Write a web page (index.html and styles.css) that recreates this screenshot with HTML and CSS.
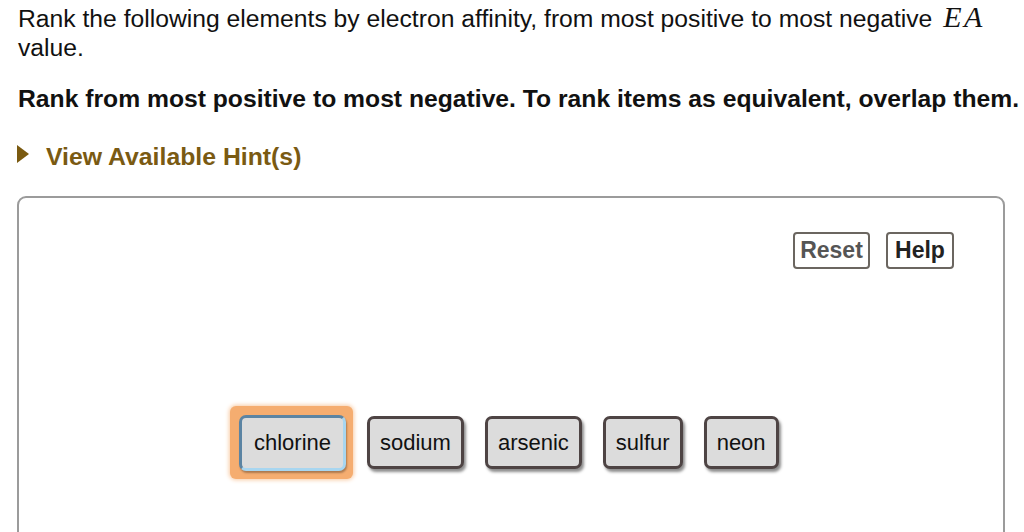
FILE: index.html
```html
<!DOCTYPE html>
<html>
<head>
<meta charset="utf-8">
<link rel="stylesheet" href="styles.css">
</head>
<body>
<div class="page">
  <p class="prompt">Rank the following elements by electron affinity, from most positive to most negative <span class="math">EA</span> value.</p>
  <p class="instr">Rank from most positive to most negative. To rank items as equivalent, overlap them.</p>
  <div class="hint"><span class="tri"></span><span class="hint-text">View Available Hint(s)</span></div>
  <div class="panel">
    <div class="tools">
      <span class="tbtn reset">Reset</span>
      <span class="tbtn help">Help</span>
    </div>
    <div class="chips">
      <span class="chip-wrap"><span class="chip sel">chlorine</span></span>
      <span class="chip">sodium</span>
      <span class="chip">arsenic</span>
      <span class="chip">sulfur</span>
      <span class="chip">neon</span>
    </div>
  </div>
</div>
</body>
</html>
```
FILE: styles.css
```css
html, body { margin: 0; padding: 0; background: #fff; }
body { font-family: "Liberation Sans", Arial, sans-serif; color: #111; overflow: hidden; width: 1024px; }
.page { padding: 0 0 0 18px; }
.prompt { margin: 0; padding-top: 4px; font-size: 24.7px; line-height: 29px; max-width: 990px; }
.math { font-family: "Liberation Serif", "Times New Roman", serif; font-style: italic; font-size: 30px; letter-spacing: 2.5px; margin-left: 4px; line-height: 20px; }
.instr { margin: 22px 0 0 0; font-size: 24.7px; line-height: 29px; font-weight: bold; white-space: nowrap; }
.hint { display: flex; align-items: center; margin-top: 29px; height: 29px; }
.tri { width: 0; height: 0; border-left: 12px solid #7a5a10; border-top: 9px solid transparent; border-bottom: 9px solid transparent; margin: 0 17px 5px -1px; }
.hint-text { font-size: 24.8px; font-weight: bold; color: #7a5a12; line-height: 29px; }
.panel { margin: 25px 0 0 -1px; width: 988px; height: 360px; border: 2px solid #9b9b9b; border-radius: 9px; box-sizing: border-box; }
.tools { display: flex; justify-content: flex-end; gap: 16px; padding: 34px 49px 0 0; }
.tbtn { display: inline-flex; align-items: center; justify-content: center; height: 37px; box-sizing: border-box; border: 2px solid #6b6660; border-radius: 4px; font-size: 23px; font-weight: bold; }
.reset { color: #555; width: 77px; }
.help { color: #222; width: 68px; }
.chips { display: flex; align-items: center; gap: 21px; padding: 137px 0 0 211px; }
.chip { display: inline-flex; align-items: center; justify-content: center; height: 53px; box-sizing: border-box; padding: 0 10px; background: #dcdcdc; border: 3px solid #4e4444; border-radius: 7px; font-size: 22px; color: #111; box-shadow: 2px 3px 3px rgba(0,0,0,0.45); }
.chip-wrap { display: inline-flex; padding: 9px 7px 8px 9px; background: #f5ad70; border-radius: 6px; box-shadow: 0 0 4px 1px #f8cba4; margin-right: -7px; }
.chip.sel { border-color: #5b84a3; border-right-color: #a8d6f0; border-bottom-color: #a8d6f0; box-shadow: 1px 2px 2px rgba(0,0,0,0.3); height: 56px; width: 107px; }
```
